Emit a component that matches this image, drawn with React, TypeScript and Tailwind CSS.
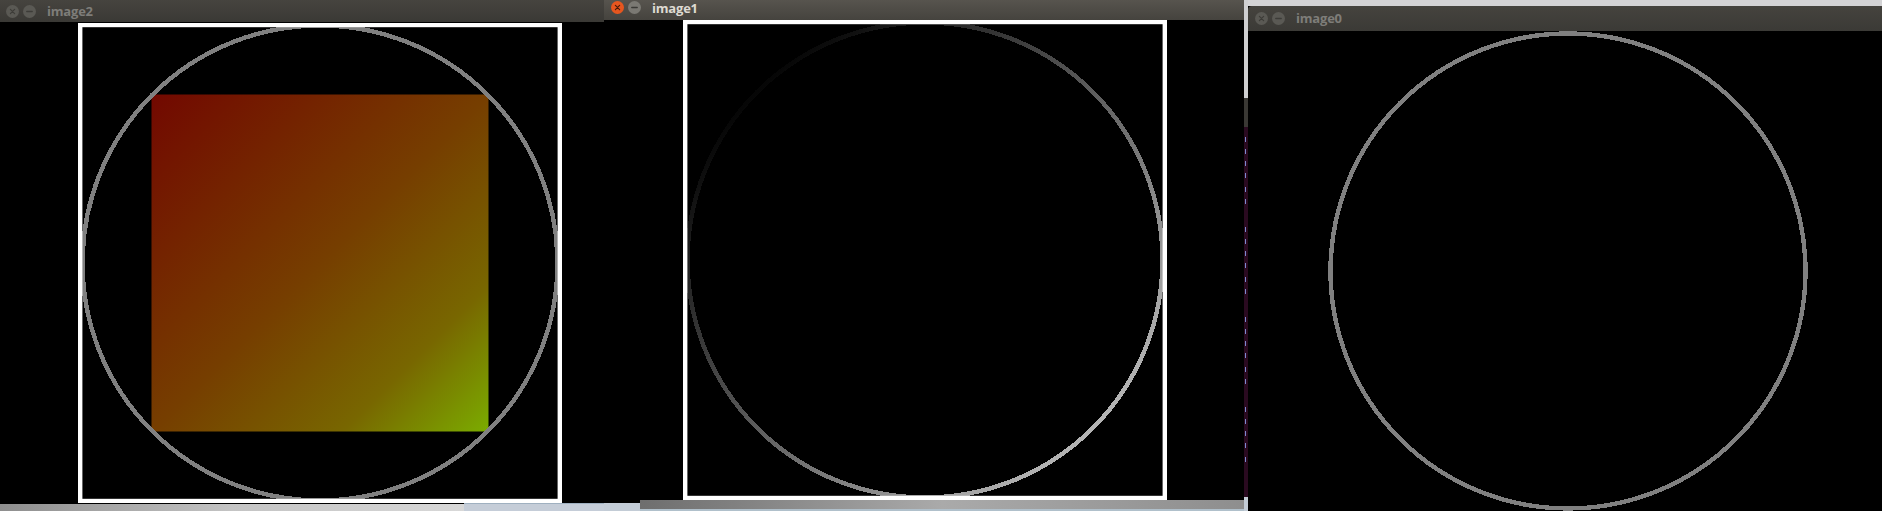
import React from 'react';
import clsx from 'clsx';

// Ubuntu (Unity) style window button: close / minimize
const WinButton: React.FC<{ kind: 'close' | 'min'; active?: boolean }> = ({ kind, active }) => {
  const fill = active && kind === 'close' ? '#e6561f' : active ? '#7b7973' : '#5a5954';
  const glyph = active && kind === 'close' ? '#4a1a08' : active ? '#3b3a36' : '#3d3c38';
  return (
    <svg width="13" height="13" viewBox="0 0 13 13" className="shrink-0">
      <circle cx="6.5" cy="6.5" r="6.5" fill={fill} />
      {kind === 'close' ? (
        <path d="M4.4 4.4 L8.6 8.6 M8.6 4.4 L4.4 8.6" stroke={glyph} strokeWidth="1.2" strokeLinecap="round" />
      ) : (
        <path d="M3.8 6.5 H9.2" stroke={glyph} strokeWidth="1.4" strokeLinecap="round" />
      )}
    </svg>
  );
};

const TitleBar: React.FC<{ title: string; active?: boolean; className?: string }> = ({ title, active, className }) => (
  <div className={clsx('flex shrink-0', className)}>
    <div className="flex items-center gap-[4px]">
      <WinButton kind="close" active={active} />
      <WinButton kind="min" active={active} />
    </div>
    <span
      className={clsx(
        "ml-[11px] font-['Open_Sans'] text-[13px] font-bold leading-[15px] tracking-[-0.2px]",
        active ? 'text-[#dedad2]' : 'text-[#7e7d79]'
      )}
    >
      {title}
    </span>
  </div>
);

// One OpenCV output image: 484x480 canvas with a grey circle
const CvImage: React.FC<{ id: string; frame?: boolean; square?: boolean; fadeRing?: boolean }> = ({
  id,
  frame,
  square,
  fadeRing,
}) => (
  <svg width="484" height="480" viewBox="0 0 484 480" className="block shrink-0">
    <defs>
      <linearGradient id={`sq-${id}`} x1="0" y1="0" x2="1" y2="1">
        <stop offset="0" stopColor="#720800" />
        <stop offset="0.5" stopColor="#763e00" />
        <stop offset="0.78" stopColor="#786600" />
        <stop offset="1" stopColor="#7bac00" />
      </linearGradient>
      <linearGradient id={`ring-${id}`} gradientUnits="userSpaceOnUse" x1="74" y1="72" x2="410" y2="408">
        <stop offset="0" stopColor="#060606" />
        <stop offset="1" stopColor="#b4b4b4" />
      </linearGradient>
    </defs>
    <rect width="484" height="480" fill="#000" />
    {square && <rect x="73.5" y="71.5" width="337" height="337" fill={`url(#sq-${id})`} />}
    <circle
      cx="242"
      cy="240"
      r="237.5"
      fill="none"
      stroke={fadeRing ? `url(#ring-${id})` : '#808080'}
      strokeWidth="4.4"
      shapeRendering="crispEdges"
    />
    {frame && <rect x="2.2" y="2" width="479.6" height="476" fill="none" stroke="#fff" strokeWidth="4.4" />}
  </svg>
);

const termMarks = [10, 22, 34, 46, 60, 72, 100, 112, 124, 136, 150, 162, 190, 202, 214, 226, 240, 252, 280, 292, 304, 316, 330];

const App: React.FC = () => {
  return (
    <div className="flex h-[511px] w-[1882px] overflow-hidden bg-black">
      {/* image2 window */}
      <div className="flex w-[604px] shrink-0 flex-col">
        <TitleBar
          title="image2"
          className="h-[22px] items-center bg-gradient-to-b from-[#46443f] to-[#3a3935] pl-[6px]"
        />
        <div className="h-[481px] bg-black pl-[78px] pt-[1px]">
          <CvImage id="i2" frame square />
        </div>
        <div className="flex h-[8px]">
          <div className="mt-[1px] w-[464px] bg-gradient-to-r from-[#8e8e8e] via-[#c4c4c4] to-[#d8d8d8]" />
          <div className="flex-1 border-t border-[#9fb0c0] bg-[#c5cdd8]" />
        </div>
      </div>

      {/* image1 window (active) */}
      <div className="flex w-[640px] shrink-0 flex-col">
        <TitleBar
          title="image1"
          active
          className="h-[20px] items-start bg-gradient-to-b from-[#57544e] to-[#45433e] pl-[7px] pt-[1px]"
        />
        <div className="h-[480px] bg-black pl-[79px]">
          <CvImage id="i1" frame fadeRing />
        </div>
        <div className="flex h-[11px]">
          <div className="flex w-[36px] flex-col">
            <div className="h-[3px] bg-black" />
            <div className="flex-1 bg-[#c3ccd6]" />
          </div>
          <div className="flex flex-1 flex-col">
            <div className="h-[9px] bg-gradient-to-r from-[#6e6e6e] via-[#aaaaaa] to-[#8e8e8e]" />
            <div className="flex-1 bg-[#b0c0cb]" />
          </div>
        </div>
      </div>

      {/* terminal peeking out behind */}
      <div className="flex w-[4px] shrink-0 flex-col">
        <div className="h-[98px] bg-[#cfcfd1]" />
        <div className="h-[29px] bg-[#3a3834]" />
        <div className="relative h-[370px] bg-[#2a0a20]">
          {termMarks.map((t) => (
            <div key={t} className="absolute left-[1px] h-[5px] w-[1px] bg-[#7d8ad0]" style={{ top: t }} />
          ))}
        </div>
        <div className="flex-1 bg-[#c3ccd6]" />
      </div>

      {/* image0 window */}
      <div className="flex flex-1 flex-col">
        <div className="h-[6px] bg-[#d3d3d5]" />
        <TitleBar
          title="image0"
          className="h-[25px] items-center rounded-tl-[4px] bg-gradient-to-b from-[#45433e] to-[#3b3a36] pl-[7px]"
        />
        <div className="flex-1 bg-black pl-[78px]">
          <CvImage id="i0" />
        </div>
      </div>
    </div>
  );
};

export default App;
